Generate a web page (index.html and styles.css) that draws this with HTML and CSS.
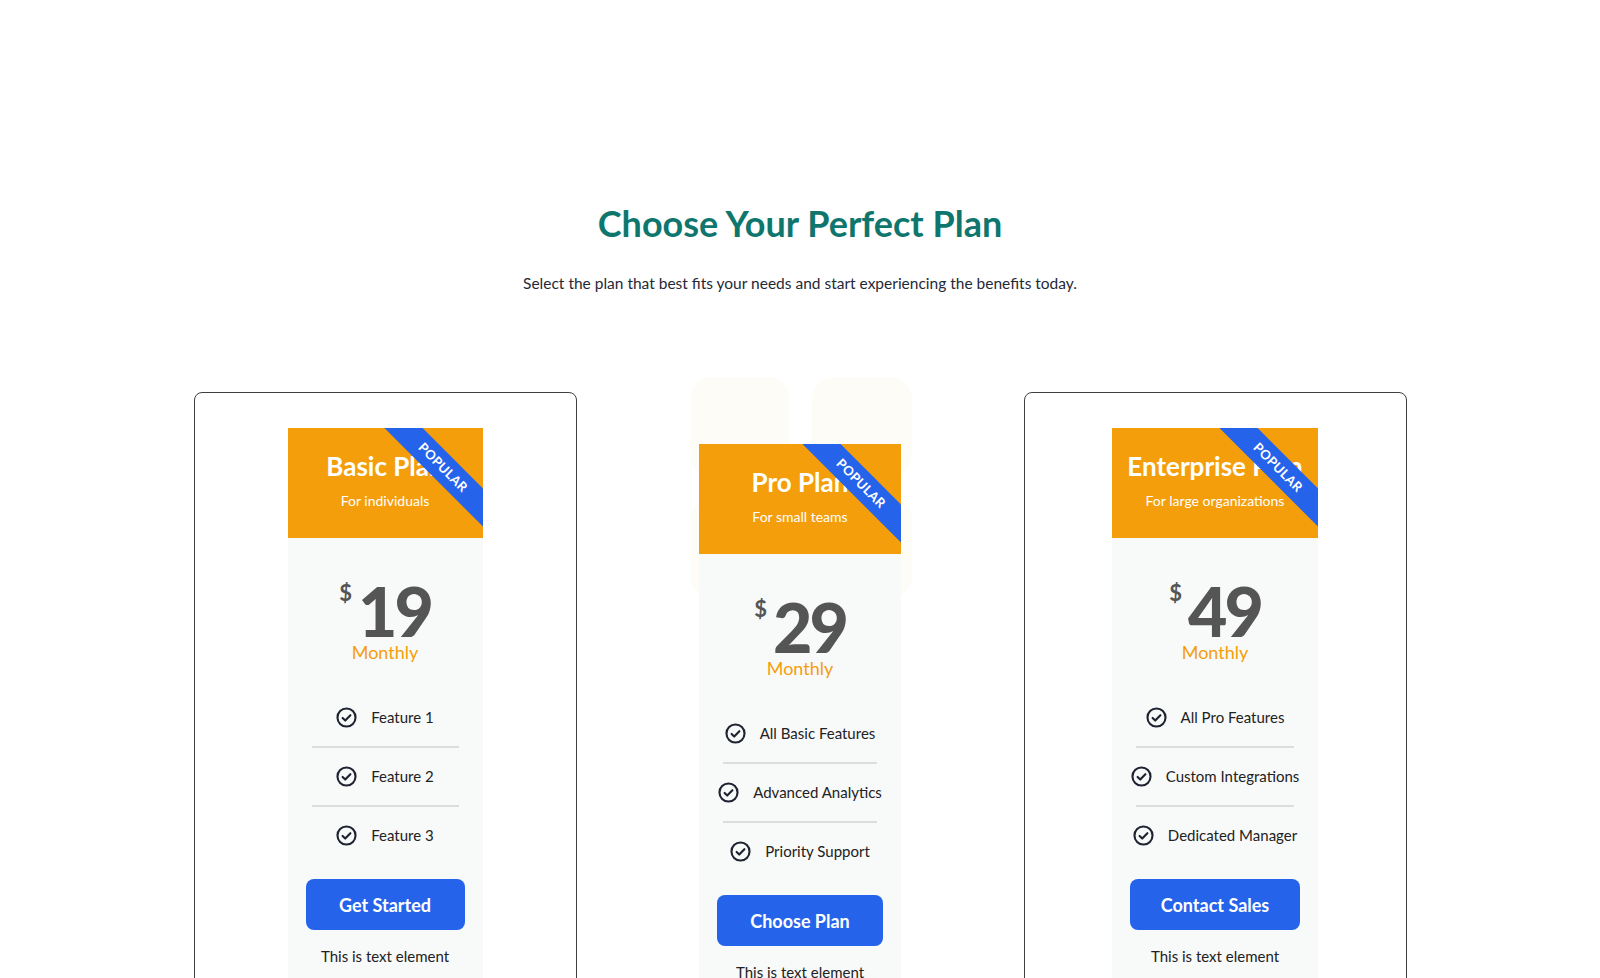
FILE: index.html
```html
<!DOCTYPE html>
<html lang="en">
<head>
    <meta charset="UTF-8">
    <meta name="viewport" content="width=device-width, initial-scale=1.0">
    <title>Pricing</title>
    <link rel="stylesheet" href="styles.css">
</head>

<body>
    <section class="pricing">
        <h1 class="pricing-title">Choose Your Perfect Plan</h1>
        <p class="pricing-lead">Select the plan that best fits your needs and start experiencing the benefits today.</p>

        <div class="plans">
            <div class="plan">
                <div class="panel panel-basic">
                    <div class="panel-head">
                        <span class="ribbon">POPULAR</span>
                        <h3>Basic Plan</h3>
                        <p>For individuals</p>
                    </div>
                    <div class="price"><sup>$</sup>19</div>
                    <div class="period">Monthly</div>
                    <ul class="features">
                        <li><svg viewBox="0 0 20 20"><circle cx="10" cy="10" r="8.6"/><path d="M6.3 10.4l2.5 2.5 4.9-5.1"/></svg>Feature 1</li>
                        <li><svg viewBox="0 0 20 20"><circle cx="10" cy="10" r="8.6"/><path d="M6.3 10.4l2.5 2.5 4.9-5.1"/></svg>Feature 2</li>
                        <li><svg viewBox="0 0 20 20"><circle cx="10" cy="10" r="8.6"/><path d="M6.3 10.4l2.5 2.5 4.9-5.1"/></svg>Feature 3</li>
                    </ul>
                    <a class="btn" href="#">Get Started</a>
                    <p class="note">This is text element</p>
                </div>
            </div>

            <div class="plan plan-featured">
                <div class="deco">
                    <span></span><span></span><span></span><span></span>
                </div>
                <div class="panel panel-pro">
                    <div class="panel-head">
                        <span class="ribbon">POPULAR</span>
                        <h3>Pro Plan</h3>
                        <p>For small teams</p>
                    </div>
                    <div class="price"><sup>$</sup>29</div>
                    <div class="period">Monthly</div>
                    <ul class="features">
                        <li><svg viewBox="0 0 20 20"><circle cx="10" cy="10" r="8.6"/><path d="M6.3 10.4l2.5 2.5 4.9-5.1"/></svg>All Basic Features</li>
                        <li><svg viewBox="0 0 20 20"><circle cx="10" cy="10" r="8.6"/><path d="M6.3 10.4l2.5 2.5 4.9-5.1"/></svg>Advanced Analytics</li>
                        <li><svg viewBox="0 0 20 20"><circle cx="10" cy="10" r="8.6"/><path d="M6.3 10.4l2.5 2.5 4.9-5.1"/></svg>Priority Support</li>
                    </ul>
                    <a class="btn" href="#">Choose Plan</a>
                    <p class="note">This is text element</p>
                </div>
            </div>

            <div class="plan">
                <div class="panel panel-enterprise">
                    <div class="panel-head">
                        <span class="ribbon">POPULAR</span>
                        <h3>Enterprise Plan</h3>
                        <p>For large organizations</p>
                    </div>
                    <div class="price"><sup>$</sup>49</div>
                    <div class="period">Monthly</div>
                    <ul class="features">
                        <li><svg viewBox="0 0 20 20"><circle cx="10" cy="10" r="8.6"/><path d="M6.3 10.4l2.5 2.5 4.9-5.1"/></svg>All Pro Features</li>
                        <li><svg viewBox="0 0 20 20"><circle cx="10" cy="10" r="8.6"/><path d="M6.3 10.4l2.5 2.5 4.9-5.1"/></svg>Custom Integrations</li>
                        <li><svg viewBox="0 0 20 20"><circle cx="10" cy="10" r="8.6"/><path d="M6.3 10.4l2.5 2.5 4.9-5.1"/></svg>Dedicated Manager</li>
                    </ul>
                    <a class="btn" href="#">Contact Sales</a>
                    <p class="note">This is text element</p>
                </div>
            </div>
        </div>
    </section>
</body>

</html>
```

FILE: styles.css
```css
body {
    margin: 0;
    padding: 0;
    background: #ffffff;
    color: #1f2937;
    font-family: "Lato", "Noto Sans", sans-serif;
}

.pricing {
    padding-top: 201px;
    text-align: center;
}
.pricing-title {
    margin: 0;
    font-size: 36px;
    line-height: 44px;
    font-weight: 700;
    color: #0f766e;
}
.pricing-lead {
    margin: 27px 0 0;
    font-size: 15.5px;
    line-height: 22px;
    color: #1f2937;
}

.plans {
    display: grid;
    grid-template-columns: repeat(3, 383px);
    gap: 32px;
    justify-content: center;
    align-items: start;
    margin-top: 98px;
}
.plan {
    position: relative;
    display: flex;
    flex-direction: column;
    align-items: center;
    padding: 35px 0 40px;
    border: 1px solid #3f3f3f;
    border-radius: 8px;
}
.plan-featured {
    border-color: transparent;
    padding-top: 51px;
}

/* faint rounded squares behind the middle card */
.deco {
    position: absolute;
    top: -16px;
    left: 80px;
    display: grid;
    grid-template-columns: 100px 100px;
    grid-auto-rows: 100px;
    gap: 21px 22px;
}
.deco span {
    background: #fdfcf6;
    border-radius: 22px;
}

.panel {
    position: relative;
    z-index: 1;
    background: #f8f9f9;
}
.panel-basic { width: 195px; }
.panel-pro { width: 202px; }
.panel-enterprise { width: 206px; }

.panel-head {
    position: relative;
    overflow: hidden;
    background: #f49e0c;
    color: #ffffff;
    padding: 22px 0 27px;
}
.panel-head h3 {
    margin: 0;
    font-size: 26px;
    line-height: 32px;
    font-weight: 700;
    white-space: nowrap;
}
.panel-head p {
    margin: 9px 0 0;
    font-size: 14px;
    line-height: 20px;
    white-space: nowrap;
}
.ribbon {
    position: absolute;
    top: 26px;
    right: -40px;
    width: 160px;
    line-height: 27px;
    background: #2563eb;
    color: #ffffff;
    font-size: 13px;
    font-weight: 700;
    letter-spacing: 0.4px;
    transform: rotate(45deg);
}

.price {
    margin-top: 43px;
    font-size: 68px;
    line-height: 60px;
    font-weight: 900;
    color: #555555;
    letter-spacing: -3px;
}
.price sup {
    display: inline-block;
    vertical-align: top;
    margin: 1px 6px 0 0;
    font-size: 22px;
    line-height: 22px;
    font-weight: 700;
    letter-spacing: 0;
}
.period {
    margin-top: 1px;
    font-size: 18px;
    line-height: 21px;
    color: #f59e0b;
}

.features {
    list-style: none;
    margin: 26px 24px 0;
    padding: 0;
}
.features li {
    display: flex;
    align-items: center;
    justify-content: center;
    gap: 14px;
    padding: 18px 0;
    font-size: 15px;
    line-height: 21px;
    color: #222222;
    white-space: nowrap;
    border-bottom: 2px solid #dddddd;
}
.features li:last-child {
    border-bottom: none;
}
.features svg {
    width: 21px;
    height: 21px;
    flex: none;
    fill: none;
    stroke: #1f2230;
    stroke-width: 2;
    stroke-linecap: round;
    stroke-linejoin: round;
}

.btn {
    display: flex;
    align-items: center;
    justify-content: center;
    height: 51px;
    margin: 15px 18px 0;
    background: #2563eb;
    border-radius: 8px;
    color: #ffffff;
    font-size: 18px;
    font-weight: 700;
    text-decoration: none;
}
.note {
    margin: 15px 0 0;
    padding-bottom: 30px;
    font-size: 15px;
    line-height: 22px;
    color: #222222;
}
```
